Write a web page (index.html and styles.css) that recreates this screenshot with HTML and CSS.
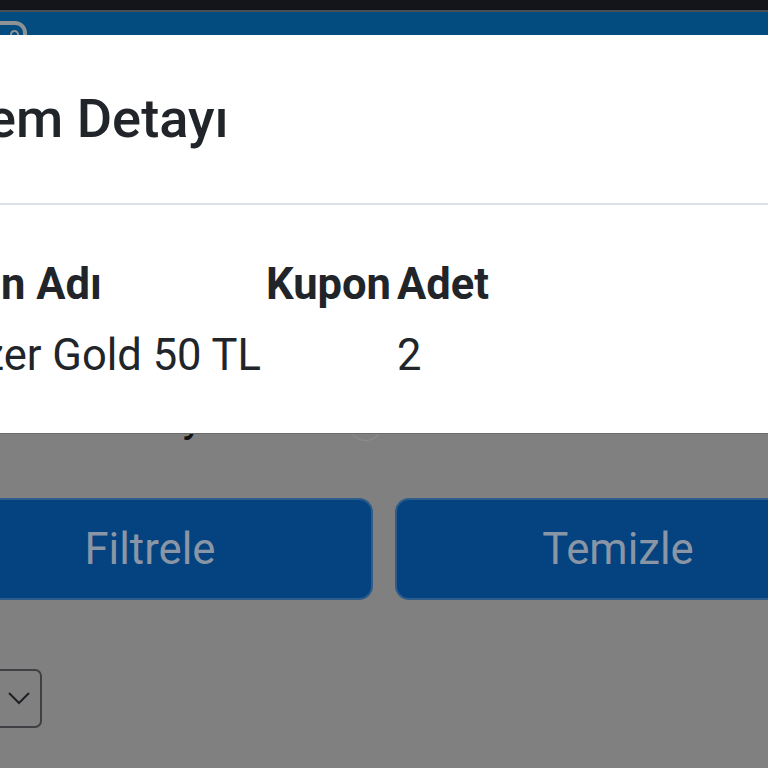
FILE: index.html
```html
<!DOCTYPE html>
<html lang="tr">
<head>
<meta charset="utf-8">
<title>İşlem Detayı</title>
<link rel="stylesheet" href="styles.css">
</head>
<body>
<div class="page">
  <div class="status"></div>
  <header class="nav"><span class="nav-icon"></span><span class="nav-dot"></span></header>
  <main class="content">
    <div class="radio-row"><span class="radio-label">Kullanılmayan</span><span class="radio"></span></div>
    <div class="actions">
      <button class="btn">Filtrele</button>
      <button class="btn">Temizle</button>
    </div>
    <div class="select">
      <svg class="chevron" width="24" height="14" viewBox="0 0 24 14"><path d="M2 2l10 10L22 2" fill="none" stroke="#1f2124" stroke-width="2"/></svg>
    </div>
  </main>
</div>
<section class="modal">
  <h1 class="modal-title">İşlem Detayı</h1>
  <div class="modal-body">
    <table class="detail">
      <thead><tr><th>Ürün Adı</th><th>Kupon</th><th>Adet</th></tr></thead>
      <tbody><tr><td>Razer Gold 50 TL</td><td></td><td>2</td></tr></tbody>
    </table>
  </div>
</section>
</body>
</html>
```
FILE: styles.css
```css
* { box-sizing: border-box; }
html, body { margin: 0; height: 100%; }
body {
  width: 768px;
  height: 768px;
  overflow: hidden;
  position: relative;
  background: #808080;
  font-family: Roboto, "Noto Sans", sans-serif;
  color: #212529;
}
.page { display: flex; flex-direction: column; height: 768px; }
.status { height: 10px; background: #14151b; flex: none; }
.nav {
  height: 25px;
  flex: none;
  background: #034c80;
  border-top: 2px solid #4a4f57;
  position: relative;
  overflow: hidden;
}
.nav-icon {
  position: absolute;
  left: -14px;
  top: 9px;
  width: 41px;
  height: 40px;
  border: 4px solid #8f9295;
  border-radius: 12px;
}
.nav-dot {
  position: absolute;
  left: 10px;
  top: 18px;
  width: 9px;
  height: 9px;
  border: 2px solid #8f9295;
  border-radius: 50%;
}
.content { flex: 1; padding-top: 376px; margin-left: -73px; width: 914px; }
.radio-row { height: 87px; display: flex; position: relative; white-space: nowrap; }
.radio-label { position: absolute; left: 53px; top: -20px; font-size: 43.5px; color: #111; }
.radio {
  position: absolute;
  left: 422px;
  top: 8px;
  width: 33px;
  height: 22px;
  border: 1px solid #8d8d8d;
  border-top: 0;
  border-radius: 0 0 17px 17px;
}
.actions { display: grid; grid-template-columns: 446px 446px; gap: 22px; }
.btn {
  height: 102px;
  background: #04437f;
  border: 2px solid #2e5d8c;
  border-radius: 14px;
  font: 400 43.7px Roboto, sans-serif;
  color: #8a96a6;
  padding: 0;
}
.select {
  margin-top: 69px;
  width: 115px;
  height: 59px;
  border: 2px solid #3e4043;
  border-radius: 7px;
  display: flex;
  align-items: flex-start;
  justify-content: flex-end;
  padding: 20px 9px 0 0;
}
.modal {
  position: absolute;
  left: -200px;
  top: 35px;
  width: 1168px;
  height: 399px;
  background: #fff;
  border-bottom: 1px solid #6c6c6c;
}
.modal-title {
  margin: 0;
  height: 170px;
  padding: 53px 0 0 130px;
  font-size: 54.2px;
  line-height: 62px;
  font-weight: 500;
  border-bottom: 2px solid #dee2e6;
}
.modal-body { padding: 48px 0 0 132px; }
.detail { border-collapse: collapse; font-size: 43.5px; line-height: 63px; }
.detail th { font-weight: 700; text-align: left; padding: 0; }
.detail td { padding: 8px 0 0; }
.detail th:first-child { width: 334px; }
.detail th:nth-child(2) { width: 131px; }
```
